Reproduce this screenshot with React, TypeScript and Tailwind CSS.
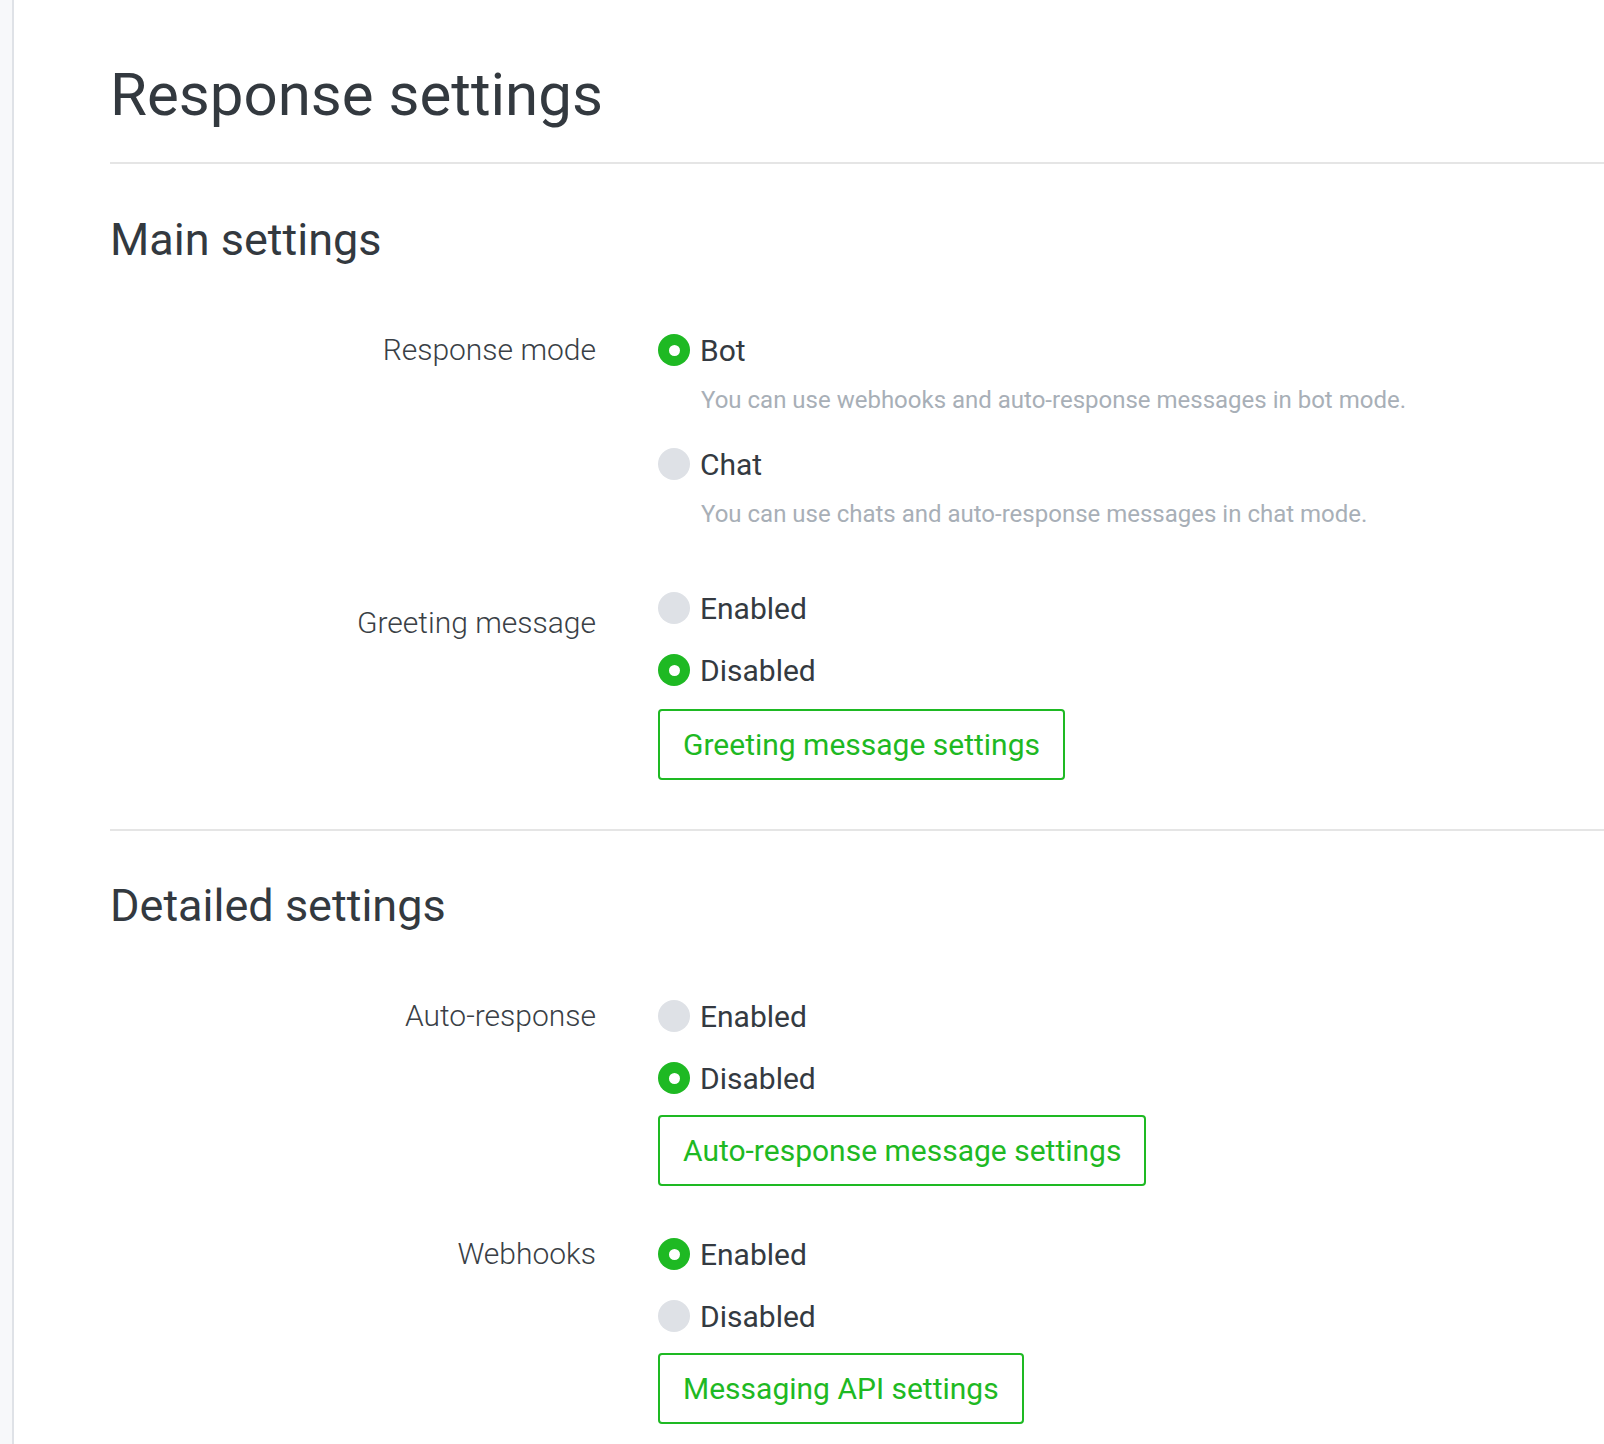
import React from "react";

type Option = {
  label: string;
  description?: string;
  checked: boolean;
};

type SettingRow = {
  label: string;
  labelOffset?: boolean;
  options: Option[];
  button?: string;
};

const MAIN_SETTINGS: SettingRow[] = [
  {
    label: "Response mode",
    options: [
      {
        label: "Bot",
        description:
          "You can use webhooks and auto-response messages in bot mode.",
        checked: true,
      },
      {
        label: "Chat",
        description: "You can use chats and auto-response messages in chat mode.",
        checked: false,
      },
    ],
  },
  {
    label: "Greeting message",
    labelOffset: true,
    options: [
      { label: "Enabled", checked: false },
      { label: "Disabled", checked: true },
    ],
    button: "Greeting message settings",
  },
];

const DETAILED_SETTINGS: SettingRow[] = [
  {
    label: "Auto-response",
    options: [
      { label: "Enabled", checked: false },
      { label: "Disabled", checked: true },
    ],
    button: "Auto-response message settings",
  },
  {
    label: "Webhooks",
    options: [
      { label: "Enabled", checked: true },
      { label: "Disabled", checked: false },
    ],
    button: "Messaging API settings",
  },
];

function Radio({ checked }: { checked: boolean }) {
  return checked ? (
    <span className="flex h-8 w-8 shrink-0 items-center justify-center rounded-full bg-[#1eb923]">
      <span className="h-[11px] w-[11px] rounded-full bg-white" />
    </span>
  ) : (
    <span className="h-8 w-8 shrink-0 rounded-full bg-[#dee1e6]" />
  );
}

function Row({ row, compact }: { row: SettingRow; compact?: boolean }) {
  return (
    <div className="grid grid-cols-[486px_1fr] gap-x-[62px]">
      <div
        className={`text-right text-[30px] leading-10 font-light text-[#3a3f46] ${
          row.labelOffset ? "pt-[15px]" : ""
        }`}
      >
        {row.label}
      </div>
      <div className="flex flex-col items-start">
        {row.options.map((opt, i) => (
          <div
            key={opt.label}
            className={
              i === 0 ? "" : opt.description !== undefined || row.options[i - 1].description ? "mt-[28px]" : "mt-[22px]"
            }
          >
            <label className="flex h-10 items-center gap-[10px] text-[30px] text-[#343a41]">
              <Radio checked={opt.checked} />
              <span>{opt.label}</span>
            </label>
            {opt.description && (
              <p className="mt-[14px] pl-[43px] text-[24px] leading-8 text-[#a8afb7]">
                {opt.description}
              </p>
            )}
          </div>
        ))}
        {row.button && (
          <button
            className={`${
              compact ? "mt-[17px]" : "mt-[19px]"
            } h-[71px] rounded-[4px] border-2 border-[#1eb923] bg-white px-[23px] text-[30px] text-[#1eb923]`}
          >
            {row.button}
          </button>
        )}
      </div>
    </div>
  );
}

export default function App() {
  return (
    <div
      className="flex min-h-[1444px] bg-white"
      style={{ fontFamily: "Roboto, 'Noto Sans', sans-serif" }}
    >
      <div className="w-[14px] shrink-0 border-r-2 border-[#dfe2e7] bg-[#f7f8fa]" />
      <main className="flex-1 pl-[96px]">
        <h1 className="pt-[65px] text-[60px] leading-[60px] text-[#33393f]">
          Response settings
        </h1>
        <div className="mt-[37px] h-[2px] bg-[#e5e5e5]" />

        <h2 className="mt-[53px] text-[45px] leading-[45px] text-[#33393f]">
          Main settings
        </h2>
        <div className="mt-[68px] flex flex-col gap-[58px]">
          {MAIN_SETTINGS.map((row) => (
            <Row key={row.label} row={row} />
          ))}
        </div>

        <div className="mt-[49px] h-[2px] bg-[#e5e5e5]" />

        <h2 className="mt-[52px] text-[45px] leading-[45px] text-[#33393f]">
          Detailed settings
        </h2>
        <div className="mt-[68px] flex flex-col gap-[48px]">
          {DETAILED_SETTINGS.map((row) => (
            <Row key={row.label} row={row} compact />
          ))}
        </div>
      </main>
    </div>
  );
}
